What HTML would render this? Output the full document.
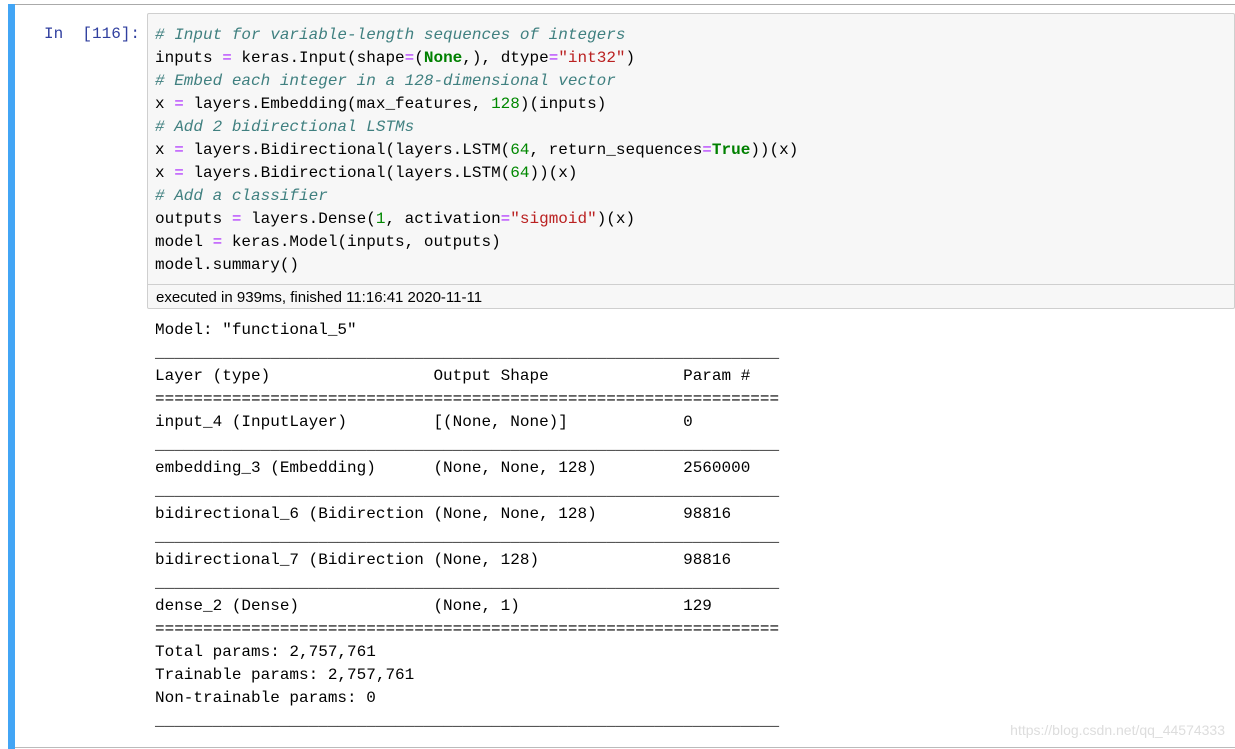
<!DOCTYPE html><html><head><style>
body{margin:0;width:1235px;height:749px;background:#fff;position:relative;overflow:hidden;font-family:"Liberation Mono",monospace;}
.top{position:absolute;left:15px;top:4px;right:0;height:1px;background:#aaa}
.bar{position:absolute;left:8px;top:4px;width:7px;height:745px;background:#42a5f5}
.bot{position:absolute;left:15px;top:747px;right:0;height:1px;background:#bbb}
.prompt{position:absolute;left:44px;top:23px;font-size:16px;line-height:23px;color:#303f9f;white-space:pre}
.box{position:absolute;left:147px;top:13px;width:1086px;height:294px;border:1px solid #cfcfcf;background:#f7f7f7;border-radius:2px}
pre{margin:0;font-family:"Liberation Mono",monospace;font-size:16px;line-height:23px;white-space:pre}
.code{position:absolute;left:7px;top:10px;color:#000}
.exec{position:absolute;left:0;top:270px;width:100%;height:24px;border-top:1px solid #cfcfcf;font-family:"Liberation Sans",sans-serif;font-size:15px;line-height:25px;padding-left:8px;box-sizing:border-box;color:#000}
.c{color:#408080;font-style:italic}.o{color:#a2f}.k{color:#008000;font-weight:bold}.s{color:#ba2121}.n{color:#080}
.out{position:absolute;left:155px;top:319px;color:#000}
.wm{position:absolute;right:10px;top:722px;font-family:"Liberation Sans",sans-serif;font-size:14px;color:#ddd}
</style></head><body>
<div class="top"></div><div class="bar"></div><div class="bot"></div>
<div class="prompt">In  [116]:</div>
<div class="box"><pre class="code"><span class="c"># Input for variable-length sequences of integers</span>
inputs <span class="o">=</span> keras.Input(shape<span class="o">=</span>(<span class="k">None</span>,), dtype<span class="o">=</span><span class="s">"int32"</span>)
<span class="c"># Embed each integer in a 128-dimensional vector</span>
x <span class="o">=</span> layers.Embedding(max_features, <span class="n">128</span>)(inputs)
<span class="c"># Add 2 bidirectional LSTMs</span>
x <span class="o">=</span> layers.Bidirectional(layers.LSTM(<span class="n">64</span>, return_sequences<span class="o">=</span><span class="k">True</span>))(x)
x <span class="o">=</span> layers.Bidirectional(layers.LSTM(<span class="n">64</span>))(x)
<span class="c"># Add a classifier</span>
outputs <span class="o">=</span> layers.Dense(<span class="n">1</span>, activation<span class="o">=</span><span class="s">"sigmoid"</span>)(x)
model <span class="o">=</span> keras.Model(inputs, outputs)
model.summary()</pre>
<div class="exec">executed in 939ms, finished 11:16:41 2020-11-11</div></div>
<pre class="out">Model: "functional_5"
_________________________________________________________________
Layer (type)                 Output Shape              Param #   
=================================================================
input_4 (InputLayer)         [(None, None)]            0         
_________________________________________________________________
embedding_3 (Embedding)      (None, None, 128)         2560000   
_________________________________________________________________
bidirectional_6 (Bidirection (None, None, 128)         98816     
_________________________________________________________________
bidirectional_7 (Bidirection (None, 128)               98816     
_________________________________________________________________
dense_2 (Dense)              (None, 1)                 129       
=================================================================
Total params: 2,757,761
Trainable params: 2,757,761
Non-trainable params: 0
_________________________________________________________________</pre>
<div class="wm">https://blog.csdn.net/qq_44574333</div>
</body></html>
